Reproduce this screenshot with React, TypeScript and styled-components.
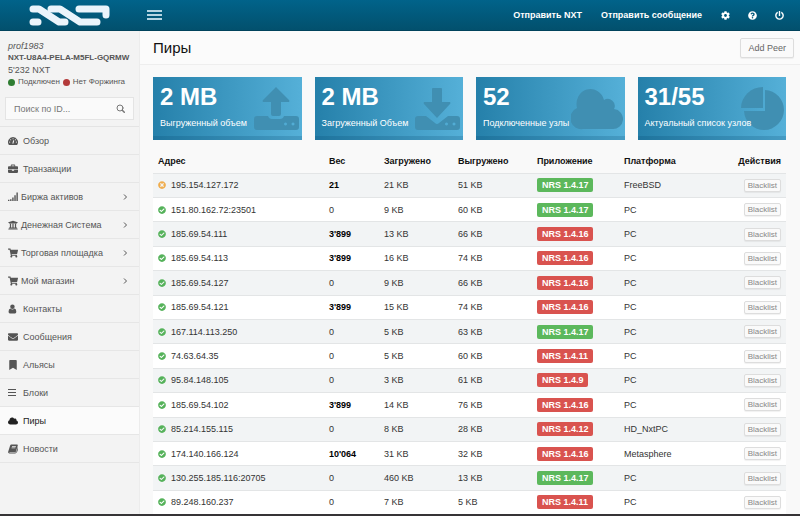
import React from "react";
import styled, { createGlobalStyle, css } from "styled-components";
import {
  FaBookmark, FaCheckCircle, FaCloud, FaCog, FaEnvelope, FaPowerOff, FaQuestionCircle,
  FaShoppingCart, FaTimesCircle, FaUniversity,
} from "react-icons/fa";

const GlobalStyle = createGlobalStyle`
  *, *::before, *::after { box-sizing: border-box; }
  html, body { margin: 0; height: 100%; }
  #root { height: 100%; }
  body {
    background: #f9f9f9;
    color: #333;
    font: 9px/12px "Liberation Sans", Arial, sans-serif;
  }
  button, input { font: inherit; color: inherit; margin: 0; }
  a { color: inherit; text-decoration: none; }
`;

const Page = styled.div`
  min-height: 100%;
  display: flex;
  flex-direction: column;
  border-bottom: 2px solid #363436;
`;

const TopBar = styled.header`
  display: flex;
  align-items: center;
  height: 31px;
  background: linear-gradient(#01638a, #02506d);
  border-bottom: 1px solid #01435c;
  color: #fff;
`;

const Brand = styled.a`
  width: 140px;
  display: flex;
  justify-content: center;
`;

const MenuToggle = styled.button`
  display: flex;
  margin-left: 7px;
  padding: 0;
  border: 0;
  background: none;
  color: #b5d5e2;
  cursor: pointer;
`;

const TopNav = styled.nav`
  margin-left: auto;
  padding-right: 16px;
  display: flex;
  align-items: center;
  gap: 19px;
  font-weight: bold;
`;

const NavGroup = styled.div<{ $gap: number }>`
  display: flex;
  align-items: center;
  gap: ${(p) => p.$gap}px;
  svg { display: block; }
`;

const Columns = styled.div`
  flex: 1;
  display: flex;
`;

const Sidebar = styled.aside`
  flex: none;
  width: 140px;
  background: #f3f3f3;
  border-right: 1px solid #ececec;
  color: #555;
`;

const Account = styled.div`
  padding: 9px 8px 0;
  white-space: nowrap;
`;

const AccountName = styled.div`font-style: italic;`;

const AccountId = styled.div`
  font-weight: bold;
  font-size: 8px;
`;

const StatusLine = styled.div`
  display: flex;
  align-items: center;
  gap: 3px;
  font-size: 8px;
`;

const Dot = styled.span<{ $color: string }>`
  flex: none;
  width: 7px;
  height: 7px;
  border-radius: 50%;
  background: ${(p) => p.$color};
`;

const Search = styled.form`
  display: flex;
  align-items: center;
  height: 23px;
  margin: 9px 5px 6px;
  padding: 0 8px;
  background: #fafafa;
  border: 1px solid #e4e4e4;
`;

const SearchInput = styled.input`
  flex: 1;
  width: 0;
  min-width: 0;
  padding: 0;
  border: 0;
  outline: 0;
  background: none;
  &::placeholder { color: #777; opacity: 1; }
`;

const IconButton = styled.button`
  display: flex;
  padding: 0;
  border: 0;
  background: none;
  color: #777;
`;

const Menu = styled.nav`border-top: 1px solid #e4e4e4;`;

const MenuLink = styled.a<{ $active?: boolean; $nested?: boolean }>`
  display: flex;
  align-items: center;
  height: 28px;
  gap: ${(p) => (p.$nested ? 3 : 5)}px;
  padding: 0 11px 0 8px;
  border-bottom: 1px solid #e6e6e6;
  ${(p) => p.$active && css`
    background: #fbfbfb;
    color: #222;
  `}
`;

const MenuIcon = styled.span`
  display: flex;
  flex: none;
  width: 10px;
`;

const MenuLabel = styled.span`
  flex: 1;
  white-space: nowrap;
`;

const Main = styled.main`
  flex: 1;
  min-width: 0;
  display: flex;
  flex-direction: column;
`;

const PageHead = styled.div`
  display: flex;
  align-items: center;
  justify-content: space-between;
  height: 34px;
  padding: 0 6px 0 13px;
  background: #fbfbfb;
  border-bottom: 1px solid #eee;
`;

const Title = styled.h1`
  margin: 0;
  font-size: 15px;
  line-height: 20px;
  font-weight: normal;
  color: #111;
`;

const Button = styled.button<{ $small?: boolean }>`
  padding: ${(p) => (p.$small ? "0 3px" : "3px 7px")};
  font-size: ${(p) => (p.$small ? 8 : 9)}px;
  line-height: ${(p) => (p.$small ? 11 : 12)}px;
  color: ${(p) => (p.$small ? "#888" : "#666")};
  background: #fafafa;
  border: 1px solid #ddd;
  border-radius: 2px;
  box-shadow: 0 1px 1px rgba(0, 0, 0, 0.06);
  cursor: pointer;
`;

const Content = styled.div`
  flex: 1;
  display: flex;
  flex-direction: column;
  padding: 12px 14px 0 13px;
`;

const Cards = styled.section`
  display: grid;
  grid-template-columns: repeat(4, 1fr);
  gap: 13px;
`;

const Card = styled.article`
  position: relative;
  height: 63px;
  padding: 7px 7px 0;
  color: #fff;
  background: linear-gradient(to right, #2580aa, #55b0d8);
  background-origin: border-box;
  border-bottom: 4px solid rgba(0, 60, 100, 0.18);
`;

const CardValue = styled.div`
  font-size: 24px;
  line-height: 26px;
  font-weight: bold;
`;

const CardLabel = styled.div`
  position: relative;
  margin-top: 7px;
  white-space: nowrap;
`;

const CardArt = styled.svg`
  position: absolute;
  right: 2px;
  bottom: 2px;
  width: 52px;
  height: 48px;
  fill: #408fb2;
`;

const TableWrap = styled.div`
  flex: 1;
  display: grid;
  margin-top: 9px;
`;

const Table = styled.table`
  width: 100%;
  border-collapse: collapse;
  table-layout: fixed;
`;

const HeadCell = styled.th<{ $w?: string; $right?: boolean }>`
  width: ${(p) => p.$w ?? "auto"};
  height: 24px;
  padding: 0 5px;
  color: #111;
  text-align: ${(p) => (p.$right ? "right" : "left")};
`;

const Row = styled.tr`
  border-top: 1px solid #e3e5e6;
  background: #fff;
  &:nth-child(odd) { background: #f2f4f5; }
`;

const Cell = styled.td<{ $bold?: boolean; $right?: boolean }>`
  padding: 0 5px;
  white-space: nowrap;
  text-align: ${(p) => (p.$right ? "right" : "left")};
  ${(p) => p.$bold && css`
    font-weight: bold;
    color: #000;
  `}
`;

const Address = styled.span<{ $ok: boolean }>`
  display: flex;
  align-items: center;
  gap: 5px;
  svg { color: ${(p) => (p.$ok ? "#55b25a" : "#f0ad4e")}; }
`;

const Tag = styled.span<{ $ok: boolean }>`
  display: inline-block;
  padding: 1px 5px;
  border-radius: 2px;
  color: #fff;
  font-weight: bold;
  background: ${(p) => (p.$ok ? "#5cb85c" : "#d9534f")};
`;

type IconProps = { size?: number };

const Logo = () => (
  <svg width="84" height="24" viewBox="0 0 84 24" fill="none" stroke="#eaf4fb" strokeWidth="7" strokeLinecap="round" strokeLinejoin="round">
    <path d="M5 6H11L31 19H37" />
    <path d="M5 19H10" />
    <path d="M23 6H32L52 19H69" />
    <path d="M51 6H78V12" />
  </svg>
);

const GaugeIcon = ({ size = 9 }: IconProps) => (
  <svg width={size} height={size} viewBox="0 0 18 18" fill="currentColor">
    <path d="M9 2a9 9 0 0 0-7.600 13.800q.3.400.8.400h13.600q.5 0 .8-.4A9 9 0 0 0 9 2Z" />
    <path stroke="#f3f3f3" strokeWidth="2" strokeLinecap="round" d="M3 11h.1M4.800 6.800h.1M9 5h.1M13.300 6.800h.1M15 11h.1M9 13l1.200-4.500" />
  </svg>
);

const BriefcaseIcon = ({ size = 9 }: IconProps) => (
  <svg width={size} height={size} viewBox="0 0 18 18" fill="currentColor">
    <path fillRule="evenodd" d="M5 4V2.500Q5 1 6.500 1h5Q13 1 13 2.500V4h3.500Q18 4 18 5.500V9.300H0V5.500Q0 4 1.500 4ZM6.500 4h5V2.500h-5Z" />
    <path d="M0 10.300h7v1.700h4v-1.700h7v4.200q0 1.500-1.500 1.500h-15Q0 16 0 14.500Z" />
  </svg>
);

const SignalIcon = ({ size = 9 }: IconProps) => (
  <svg width={size} height={size} viewBox="0 0 18 18" fill="currentColor">
    <path d="M0 14h2.500v2H0ZM3.800 13h2.500v3H3.800ZM7.600 10h2.500v6H7.600ZM11.400 6h2.500v10h-2.500ZM15.200 1h2.500v15h-2.500Z" />
  </svg>
);

const PersonIcon = ({ size = 9 }: IconProps) => (
  <svg width={size} height={size} viewBox="0 0 18 18" fill="currentColor">
    <circle cx="8" cy="5" r="4" />
    <path d="M4.200 8.200Q8 11.500 11.800 8.200Q15 9 15 14q0 3-2.500 3h-9Q1 17 1 14 1 9 4.200 8.200Z" />
  </svg>
);

const LinesIcon = ({ size = 9 }: IconProps) => (
  <svg width={size} height={size} viewBox="0 0 10 10" stroke="currentColor">
    <path d="M0 1.500H8M0 4.500H8M0 7.500H8" />
  </svg>
);

const BookIcon = ({ size = 9 }: IconProps) => (
  <svg width={size} height={size} viewBox="0 0 18 18" fill="currentColor">
    <path fillRule="evenodd" d="M6 1h10.500q1.500.2 1 2L14.500 13q-.5 1.500-2 1.500H3q-1 .3-.5 1h11q1 0 1.500-1.500L17.800 5q.5 9-2.300 10.500-.7 1.500-2.500 1.500H2.500Q-.3 16.500.3 14L3.700 3Q4.300 1.200 6 1ZM7.400 4l-.4 1.200h7l.4-1.200ZM6.600 6.500l-.4 1.200h7l.4-1.200Z" />
  </svg>
);

const ChevronIcon = () => (
  <svg width="5" height="8" viewBox="0 0 5 8" fill="none" stroke="currentColor">
    <path d="M1 1.500L3.500 4L1 6.500" />
  </svg>
);

const SearchIcon = () => (
  <svg width="9" height="9" viewBox="0 0 9 9" fill="none" stroke="currentColor" strokeLinecap="round">
    <circle cx="4" cy="4" r="3" />
    <path d="M6.300 6.300L8.300 8.300" strokeWidth="1.500" />
  </svg>
);

const menu = [
  { label: "Обзор", Icon: GaugeIcon },
  { label: "Транзакции", Icon: BriefcaseIcon },
  { label: "Биржа активов", Icon: SignalIcon, nested: true },
  { label: "Денежная Система", Icon: FaUniversity, nested: true },
  { label: "Торговая площадка", Icon: FaShoppingCart, nested: true },
  { label: "Мой магазин", Icon: FaShoppingCart, nested: true },
  { label: "Контакты", Icon: PersonIcon },
  { label: "Сообщения", Icon: FaEnvelope },
  { label: "Альясы", Icon: FaBookmark },
  { label: "Блоки", Icon: LinesIcon },
  { label: "Пиры", Icon: FaCloud, active: true },
  { label: "Новости", Icon: BookIcon },
];

const driveDots = "M37.500 36.500a1.500 1.500 0 1 0 .01 0ZM45 36.500a1.500 1.500 0 1 0 .01 0Z";

const cards = [
  {
    value: "2 MB",
    label: "Выгруженный объем",
    art: (
      <>
        <path fillRule="evenodd" d={`M9 30H20Q21 33 24 33H32Q35 33 36 30H48Q51 30 51 33V41Q51 44 48 44H9Q6 44 6 41V33Q6 30 9 30Z${driveDots}`} />
        <path d="M23 28V16H15Q14 15 15 14L28 1L41 14Q42 15 41 16H33V28Q33 30 31 30H25Q23 30 23 28Z" />
      </>
    ),
  },
  {
    value: "2 MB",
    label: "Загруженный Объем",
    art: (
      <>
        <path fillRule="evenodd" d={`M9 30H17L26 37Q28 39 30 37L39 30H48Q51 30 51 33V41Q51 44 48 44H9Q6 44 6 41V33Q6 30 9 30Z${driveDots}`} />
        <path d="M23 3Q23 2 24 2H32Q33 2 33 3V16H41Q42 17 41 18L28 32L15 18Q14 17 15 16H23Z" />
      </>
    ),
  },
  { value: "52", label: "Подключенные узлы", art: <path d="M12 43A11 11 0 0 1 6 22A14 15 0 0 1 33 14A7 7 0 0 1 43 23A10 10 0 0 1 41 43Z" /> },
  { value: "31/55", label: "Актуальный список узлов", art: <><path d="M31 1V22H9A22 21 0 0 1 31 1Z" /><path d="M33 4A20 20 0 1 1 12 25H33Z" /></> },
];

type Peer = [boolean, string, string, string, string, string, string];
const peers: Peer[] = [
  [false, "195.154.127.172", "21", "21 KB", "51 KB", "1.4.17", "FreeBSD"],
  [true, "151.80.162.72:23501", "0", "9 KB", "60 KB", "1.4.17", "PC"],
  [true, "185.69.54.111", "3'899", "13 KB", "66 KB", "1.4.16", "PC"],
  [true, "185.69.54.113", "3'899", "16 KB", "74 KB", "1.4.16", "PC"],
  [true, "185.69.54.127", "0", "9 KB", "66 KB", "1.4.16", "PC"],
  [true, "185.69.54.121", "3'899", "15 KB", "74 KB", "1.4.16", "PC"],
  [true, "167.114.113.250", "0", "5 KB", "63 KB", "1.4.17", "PC"],
  [true, "74.63.64.35", "0", "5 KB", "60 KB", "1.4.11", "PC"],
  [true, "95.84.148.105", "0", "3 KB", "61 KB", "1.4.9", "PC"],
  [true, "185.69.54.102", "3'899", "14 KB", "76 KB", "1.4.16", "PC"],
  [true, "85.214.155.115", "0", "8 KB", "28 KB", "1.4.12", "HD_NxtPC"],
  [true, "174.140.166.124", "10'064", "31 KB", "32 KB", "1.4.16", "Metasphere"],
  [true, "130.255.185.116:20705", "0", "460 KB", "13 KB", "1.4.17", "PC"],
  [true, "89.248.160.237", "0", "7 KB", "5 KB", "1.4.11", "PC"],
];

export default function App() {
  return (
    <>
      <GlobalStyle />
      <Page>
        <TopBar>
          <Brand href="#" aria-label="NXT"><Logo /></Brand>
          <MenuToggle aria-label="Меню">
            <svg width="15" height="10" stroke="currentColor" strokeWidth="2"><path d="M0 1H15M0 5H15M0 9H15" /></svg>
          </MenuToggle>
          <TopNav>
            <NavGroup $gap={19}>
              <a href="#send">Отправить NXT</a>
              <a href="#message">Отправить сообщение</a>
            </NavGroup>
            <NavGroup $gap={18}>
              <a href="#settings" aria-label="Настройки"><FaCog size={9} /></a>
              <a href="#help" aria-label="Помощь"><FaQuestionCircle size={9} /></a>
              <a href="#logout" aria-label="Выход"><FaPowerOff size={9} /></a>
            </NavGroup>
          </TopNav>
        </TopBar>
        <Columns>
          <Sidebar>
            <Account>
              <AccountName>prof1983</AccountName>
              <AccountId>NXT-U8A4-PELA-M5FL-GQRMW</AccountId>
              <div>5'232 NXT</div>
              <StatusLine>
                <Dot $color="#2f7d32" />Подключен <Dot $color="#b33a3a" />Нет Форжинга
              </StatusLine>
            </Account>
            <Search>
              <SearchInput aria-label="Поиск по ID" placeholder="Поиск по ID..." />
              <IconButton aria-label="Найти" type="button"><SearchIcon /></IconButton>
            </Search>
            <Menu>
              {menu.map(({ label, Icon, nested, active }) => (
                <MenuLink key={label} href="#" $nested={nested} $active={active}>
                  <MenuIcon><Icon size={10} /></MenuIcon>
                  <MenuLabel>{label}</MenuLabel>
                  {nested && <ChevronIcon />}
                </MenuLink>
              ))}
            </Menu>
          </Sidebar>
          <Main>
            <PageHead>
              <Title>Пиры</Title>
              <Button>Add Peer</Button>
            </PageHead>
            <Content>
              <Cards>
                {cards.map((c) => (
                  <Card key={c.label}>
                    <CardArt viewBox="0 0 52 48" aria-hidden="true">{c.art}</CardArt>
                    <CardValue>{c.value}</CardValue>
                    <CardLabel>{c.label}</CardLabel>
                  </Card>
                ))}
              </Cards>
              <TableWrap>
                <Table>
                  <thead>
                    <tr>
                      <HeadCell $w="27%">Адрес</HeadCell>
                      <HeadCell $w="55px">Вес</HeadCell>
                      <HeadCell $w="74px">Загружено</HeadCell>
                      <HeadCell $w="79px">Выгружено</HeadCell>
                      <HeadCell $w="87px">Приложение</HeadCell>
                      <HeadCell>Платформа</HeadCell>
                      <HeadCell $w="76px" $right>Действия</HeadCell>
                    </tr>
                  </thead>
                  <tbody>
                    {peers.map(([up, address, weight, down, sent, version, platform]) => (
                      <Row key={address}>
                        <Cell>
                          <Address $ok={up}>{up ? <FaCheckCircle size={8} /> : <FaTimesCircle size={8} />}{address}</Address>
                        </Cell>
                        <Cell $bold={weight !== "0"}>{weight}</Cell>
                        <Cell>{down}</Cell>
                        <Cell>{sent}</Cell>
                        <Cell><Tag $ok={version === "1.4.17"}>NRS {version}</Tag></Cell>
                        <Cell>{platform}</Cell>
                        <Cell $right><Button $small>Blacklist</Button></Cell>
                      </Row>
                    ))}
                  </tbody>
                </Table>
              </TableWrap>
            </Content>
          </Main>
        </Columns>
      </Page>
    </>
  );
}
